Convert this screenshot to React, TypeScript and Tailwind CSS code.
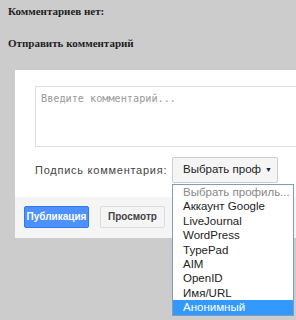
import React from "react";

const items = [
  "Выбрать профиль...",
  "Аккаунт Google",
  "LiveJournal",
  "WordPress",
  "TypePad",
  "AIM",
  "OpenID",
  "Имя/URL",
  "Анонимный",
];

export default function App() {
  return (
    <div className="relative w-[296px] h-[320px] overflow-hidden bg-[#cccccc]">
      <div className="pl-[8px] pt-[4px] font-['Liberation_Serif',serif] font-bold text-[11px] leading-[14px] text-[#222]">
        <div>Комментариев нет:</div>
        <div className="mt-[18px]">Отправить комментарий</div>
      </div>
      <div className="mt-[20px] ml-[15px] w-[300px] bg-white font-['Liberation_Sans',Arial,sans-serif]">
        <div className="pt-[16px] pl-[20px]">
          <div className="h-[61px] border border-[#dddddd] bg-white px-[5px] pt-[5px] font-['DejaVu_Sans_Mono',monospace] text-[10.2px] leading-[13px] text-[#999]">
            Введите комментарий...
          </div>
        </div>
        <div className="flex items-center mt-[10px] pl-[20px] h-[26px]">
          <span className="text-[11px] tracking-[0.75px] text-[#444] w-[137px] whitespace-nowrap">Подпись комментария:</span>
          <div className="flex items-center w-[106px] h-[26px] border border-[#cccccc] rounded-[2px] bg-[#f5f5f5] pl-[10px] pr-[5px]">
            <span className="flex-1 overflow-hidden whitespace-nowrap text-[11.5px] text-[#222]">Выбрать проф</span>
            <span className="text-[7px] text-[#222]">▼</span>
          </div>
        </div>
        <div className="mt-[14px] h-[41px] bg-[#f5f5f5] pl-[9px] pt-[9px] flex gap-[11px]">
          <div className="w-[65px] h-[22px] rounded-[2px] bg-[#4d90fe] border border-[#3079ed] whitespace-nowrap text-center text-[10px] leading-[20px] font-bold text-white">
            Публикация
          </div>
          <div className="w-[65px] h-[22px] rounded-[2px] bg-[#f5f5f5] border border-[#dcdcdc] text-center text-[10px] leading-[20px] font-bold text-[#444]">
            Просмотр
          </div>
        </div>
      </div>
      <div className="absolute left-[172px] top-[184px] w-[122px] border border-[#7f9db9] bg-white font-['Liberation_Sans',Arial,sans-serif] text-[11.5px]">
        {items.map((it, i) => (
          <div
            key={it}
            className={
              "h-[14.4px] leading-[14.4px] pl-[10px] whitespace-nowrap overflow-hidden " +
              (i === 0 ? "text-[#888]" : i === items.length - 1 ? "bg-[#3399ff] text-white" : "text-[#222]")
            }
          >
            {it}
          </div>
        ))}
      </div>
    </div>
  );
}
